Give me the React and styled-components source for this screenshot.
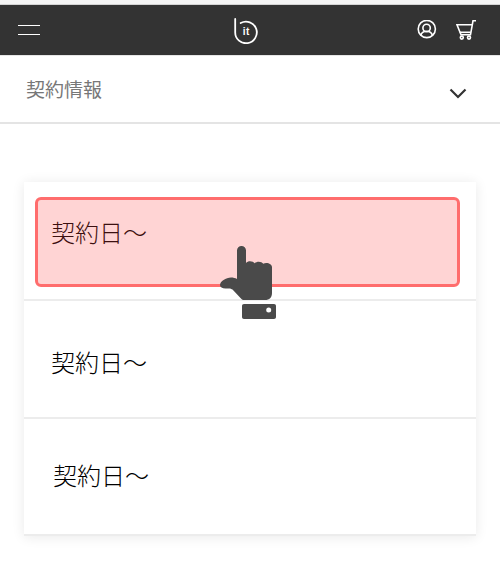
import styled, { createGlobalStyle } from "styled-components";

const GlobalStyle = createGlobalStyle`
  html, body {
    margin: 0;
    padding: 0;
    background: #ffffff;
  }
  body {
    font-family: "Noto Sans CJK JP", "Liberation Sans", sans-serif;
  }
`;

const ROWS = [
  { id: 1, height: 119, top: 23, left: 27 },
  { id: 2, height: 118, top: 34, left: 27 },
  { id: 3, height: 117, top: 29, left: 29 },
];

export default function App() {
  return (
    <Page>
      <GlobalStyle />
      <TopStrip />
      <Header>
        <MenuButton aria-label="menu">
          <MenuLine />
          <MenuLine />
        </MenuButton>
        <Logo />
        <HeaderIcons>
          <UserIcon />
          <CartIcon />
        </HeaderIcons>
      </Header>
      <Accordion>
        <AccordionTitle>契約情報</AccordionTitle>
        <Chevron />
      </Accordion>
      <Card>
        {ROWS.map((row) => (
          <Row key={row.id} $height={row.height} $top={row.top} $left={row.left}>
            契約日〜
          </Row>
        ))}
        <Highlight />
        <HandWrap>
          <HandIcon />
        </HandWrap>
      </Card>
    </Page>
  );
}

const Logo = () => (
  <LogoSvg viewBox="0 0 26 26" width="26" height="26">
    <path
      d="M2.200 1v13.300a10.800 10.800 0 1 0 5.500-9.300"
      fill="none"
      stroke="#fff"
      strokeWidth="1.800"
      strokeLinecap="round"
    />
    <LogoText x="13.400" y="16.800" textAnchor="middle">
      it
    </LogoText>
  </LogoSvg>
);

const UserIcon = () => (
  <svg viewBox="0 0 20 20" width="20" height="20" fill="none" stroke="#fff" strokeWidth="1.600">
    <circle cx="9.800" cy="9" r="8.600" />
    <circle cx="9.600" cy="8" r="3.700" />
    <path d="M3.800 15.500c.6-2.800 2.800-4.200 5.800-4.200s5.200 1.400 5.800 4.200" />
  </svg>
);

const CartIcon = () => (
  <svg viewBox="0 0 21 20" width="21" height="20" fill="none" stroke="#fff" strokeWidth="1.600">
    <path d="M20 .8h-3L14.500 14.800H5L1 4.800h15.200" />
    <path d="M3.800 12.300h11" />
    <circle cx="5.800" cy="17.600" r="1.500" />
    <circle cx="13" cy="17.600" r="1.500" />
  </svg>
);

const Chevron = () => (
  <ChevronSvg viewBox="0 0 18 11" width="18" height="11" fill="none" stroke="#333" strokeWidth="2.200">
    <path d="M1.500 1.500L9 9l7.500-7.500" />
  </ChevronSvg>
);

const HandIcon = () => (
  <svg viewBox="0 0 56 74" width="56" height="74" fill="#4a4a4a">
    <path d="M17 4.500a4.500 4.500 0 0 1 9 0V17c1-1.200 2.500-1.700 4-1.700 2 0 3.800.8 4.700 2 1-1 2.500-1.500 4-1.500 2 0 3.700.8 4.600 2 .8-.5 1.800-.8 3-.8 3 0 5.700 1.700 5.700 4.300V47c0 4.500-2.500 7-7 7H24c-1.200 0-2-.4-2.800-1.200L12.500 43.600c-1.300-1.200-3-1.400-5.500-1.100C3 43 0 41.500 0 39c0-3.500 6-7.500 11-7.500 2.200 0 4.300.5 6 1.500z" />
    <path
      fillRule="evenodd"
      d="M24 58h30c1.200 0 2 .8 2 2v11c0 1.200-.8 2-2 2H24c-1.200 0-2-.8-2-2V60c0-1.200.8-2 2-2zm24.700 3.500a2.500 2.500 0 1 0 0 5 2.500 2.500 0 0 0 0-5z"
    />
  </svg>
);

const Page = styled.div`
  position: relative;
  width: 500px;
  height: 575px;
  overflow: hidden;
  background: #ffffff;
`;

const TopStrip = styled.div`
  height: 4px;
  background: #f4f4f4;
  border-bottom: 1px solid #d4d4d4;
`;

const Header = styled.header`
  display: flex;
  align-items: center;
  justify-content: space-between;
  box-sizing: border-box;
  position: relative;
  height: 50px;
  padding: 0 23px 0 18px;
  background: #333333;
`;

const MenuButton = styled.div`
  display: flex;
  flex-direction: column;
  gap: 8px;
  width: 22px;
`;

const MenuLine = styled.span`
  display: block;
  height: 1px;
  background: #ffffff;
`;

const LogoSvg = styled.svg`
  position: absolute;
  left: 233px;
  top: 13px;
`;

const LogoText = styled.text`
  fill: #ffffff;
  font-family: "Liberation Sans", sans-serif;
  font-size: 10px;
  font-weight: 700;
  letter-spacing: 0.5px;
`;

const HeaderIcons = styled.div`
  display: flex;
  align-items: center;
  gap: 19px;
`;

const Accordion = styled.div`
  display: flex;
  align-items: center;
  justify-content: space-between;
  box-sizing: border-box;
  height: 69px;
  padding: 0 33px 0 26px;
  border-top: 1px solid #e6e6e6;
  border-bottom: 2px solid #e4e4e4;
`;

const AccordionTitle = styled.div`
  margin-top: -1px;
  color: #777777;
  font-size: 19px;
  line-height: 28px;
`;

const ChevronSvg = styled.svg`
  margin-top: 8px;
`;

const Card = styled.div`
  position: relative;
  margin: 58px 24px 0;
  background: #ffffff;
  box-shadow: 0 1px 12px rgba(0, 0, 0, 0.09);
`;

const Row = styled.div`
  box-sizing: border-box;
  height: ${({ $height }) => $height}px;
  padding: ${({ $top }) => $top}px 0 0 ${({ $left }) => $left}px;
  color: #000000;
  font-size: 24px;
  font-weight: 300;
  line-height: 54px;
  border-bottom: 2px solid #ececec;

  &:last-of-type {
    border-bottom: none;
  }
`;

const Highlight = styled.div`
  position: absolute;
  left: 11px;
  top: 15px;
  box-sizing: border-box;
  width: 425px;
  height: 90px;
  background: rgba(255, 70, 70, 0.23);
  border: 3px solid #ff6d6d;
  border-radius: 6px;
`;

const HandWrap = styled.div`
  position: absolute;
  left: 196px;
  top: 64px;
  line-height: 0;
`;
